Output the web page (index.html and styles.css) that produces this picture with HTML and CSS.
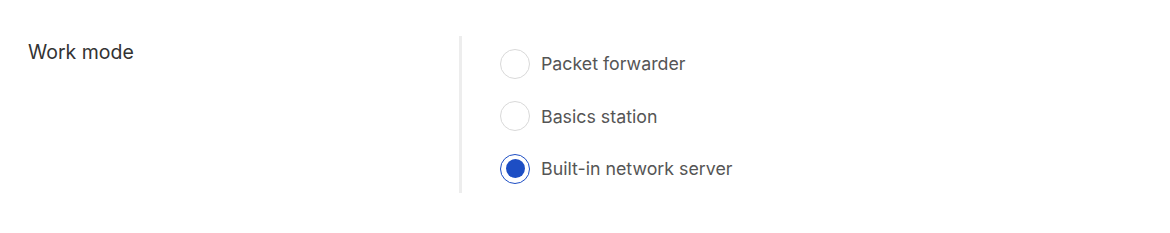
FILE: index.html
```html
<!DOCTYPE html>
<html>
<head>
<meta charset="utf-8">
<link rel="stylesheet" href="styles.css">
</head>
<body>
<div class="form-row">
  <div class="label">Work mode</div>
  <div class="control">
    <label class="option"><span class="radio"></span><span class="text">Packet forwarder</span></label>
    <label class="option"><span class="radio"></span><span class="text">Basics station</span></label>
    <label class="option"><span class="radio checked"></span><span class="text">Built-in network server</span></label>
  </div>
</div>
</body>
</html>
```

FILE: styles.css
```css
html, body {
  margin: 0;
  padding: 0;
  background: #fff;
  font-family: Inter, "Noto Sans", sans-serif;
}
.form-row {
  display: flex;
  padding: 36px 0 0 28px;
}
.label {
  width: 431px;
  font-size: 19.5px;
  line-height: 30px;
  color: #333;
  margin-top: 1px;
}
.control {
  border-left: 3px solid #ededed;
  padding: 12.5px 0 9.5px 38px;
  display: flex;
  flex-direction: column;
  gap: 22.5px;
}
.option {
  display: flex;
  align-items: center;
  gap: 11px;
  height: 30px;
}
.radio {
  box-sizing: border-box;
  width: 30px;
  height: 30px;
  border-radius: 50%;
  border: 1.5px solid #d9d9d9;
  background: #fff;
  position: relative;
}
.radio.checked {
  border-color: #1d4ec4;
}
.radio.checked::after {
  content: "";
  position: absolute;
  left: 50%;
  top: 50%;
  width: 19px;
  height: 19px;
  margin: -9.5px 0 0 -9.5px;
  border-radius: 50%;
  background: #1d4ec4;
}
.text {
  font-size: 17.8px;
  color: #555;
}
```
